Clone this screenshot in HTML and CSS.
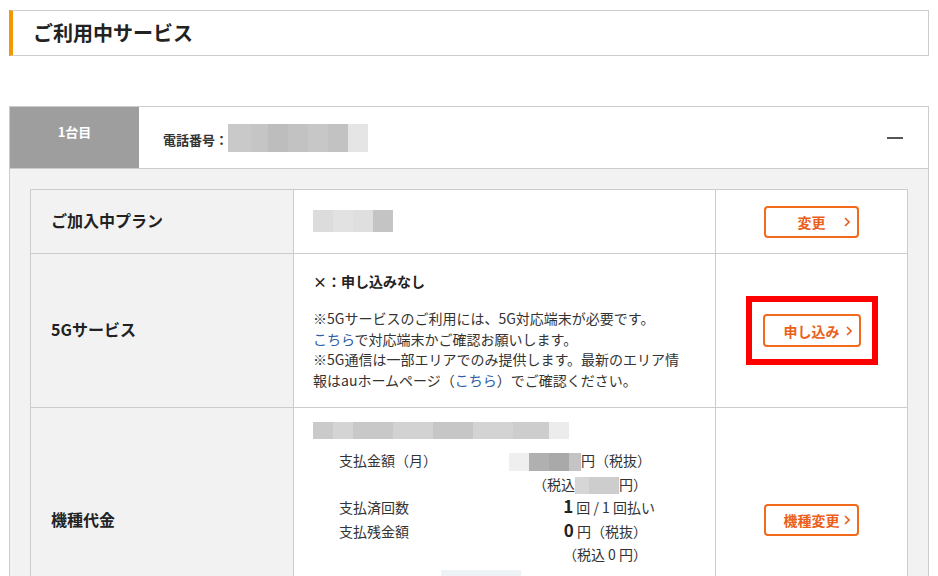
FILE: index.html
```html
<!DOCTYPE html>
<html lang="ja">
<head>
    <meta charset="UTF-8">
    <meta name="viewport" content="width=device-width, initial-scale=1.0">
    <title>ご利用中サービス</title>
    <link rel="stylesheet" href="styles.css">
</head>
<body>
    <div class="page">
        <h1 class="page-title">ご利用中サービス</h1>

        <section class="line-card">
            <div class="line-head">
                <div class="line-tab">1台目</div>
                <div class="line-phone">
                    <span class="phone-label">電話番号：</span>
                    <span class="blur blur-phone"></span>
                </div>
                <span class="toggle"></span>
            </div>

            <div class="line-body">
                <table class="svc-table">
                    <colgroup>
                        <col class="col-label">
                        <col class="col-info">
                        <col class="col-action">
                    </colgroup>
                    <tr class="row-plan">
                        <th>ご加入中プラン</th>
                        <td class="info"><span class="blur blur-plan"></span></td>
                        <td class="action">
                            <a class="btn" href="#">変更<svg class="chev" viewBox="0 0 6 10"><polyline points="1,1 5,5 1,9"/></svg></a>
                        </td>
                    </tr>
                    <tr class="row-5g">
                        <th>5Gサービス</th>
                        <td class="info">
                            <p class="status">×：申し込みなし</p>
                            <p class="note">※5Gサービスのご利用には、5G対応端末が必要です。<br><a href="#">こちら</a>で対応端末かご確認お願いします。<br>※5G通信は一部エリアでのみ提供します。最新のエリア情報はauホームページ（<a href="#">こちら</a>）でご確認ください。</p>
                        </td>
                        <td class="action">
                            <span class="mark">
                                <a class="btn btn-wide" href="#">申し込み<svg class="chev" viewBox="0 0 6 10"><polyline points="1,1 5,5 1,9"/></svg></a>
                            </span>
                        </td>
                    </tr>
                    <tr class="row-device">
                        <th>機種代金</th>
                        <td class="info">
                            <span class="blur blur-model"></span>
                            <div class="pay-grid">
                                <div class="pay-label">支払金額（月）</div>
                                <div class="pay-value"><span class="blur blur-amount"></span>円（税抜）<br>（税込<span class="blur blur-tax"></span>円）</div>
                                <div class="pay-label">支払済回数</div>
                                <div class="pay-value"><span class="over"><b>1</b> 回 / 1 回払い</span></div>
                                <div class="pay-label">支払残金額</div>
                                <div class="pay-value"><b>0</b> 円（税抜）<br>（税込 0 円）</div>
                            </div>
                            <span class="blur blur-next"></span>
                            <div class="pay-grid pay-more">
                                <div class="pay-label">&nbsp;</div>
                                <div class="pay-value">&nbsp;</div>
                            </div>
                        </td>
                        <td class="action">
                            <a class="btn" href="#">機種変更<svg class="chev" viewBox="0 0 6 10"><polyline points="1,1 5,5 1,9"/></svg></a>
                        </td>
                    </tr>
                </table>
            </div>
        </section>
    </div>
</body>
</html>
```

FILE: styles.css
```css
body { margin: 0; background: #fff; color: #333; font-family: "Noto Sans CJK JP", "Noto Sans", sans-serif; }
.page { padding: 10px 9px 0 9px; }

.page-title { margin: 0; height: 44px; line-height: 44px; padding-left: 20px; font-size: 20px; font-weight: 700; color: #222; border: 1px solid #ccc; border-left: 4px solid #f39800; }

.line-card { margin-top: 50px; border: 1px solid #ccc; }
.line-head { display: flex; height: 61px; border-bottom: 1px solid #ccc; background: #fff; }
.line-tab { width: 129px; background: #9e9e9e; color: #fff; font-size: 13px; font-weight: 700; text-align: center; line-height: 20px; padding-top: 15px; box-sizing: border-box; }
.line-phone { display: flex; align-items: center; padding-left: 24px; }
.phone-label { font-size: 13px; font-weight: 700; padding-top: 5px; line-height: 20px; }
.toggle { margin: auto 25px auto auto; width: 16px; height: 2px; background: #555; }

.line-body { background: #f2f2f2; padding: 20px; }
.svc-table { width: 100%; table-layout: fixed; border-collapse: collapse; background: #fff; }
.col-label { width: 263px; }
.col-action { width: 192px; }
.svc-table th, .svc-table td { border: 1px solid #ccc; }
.svc-table th { background: #f2f2f2; text-align: left; padding: 0 20px 3px; font-size: 16px; font-weight: 700; color: #222; }
.svc-table td.info { padding: 17px 19px; font-size: 14px; vertical-align: top; }
.svc-table td.action { text-align: center; vertical-align: middle; }
.row-plan th, .row-plan td.info { height: 60px; padding-top: 0; padding-bottom: 3px; vertical-align: middle; }

.status { margin: 0 0 17px; font-size: 14px; font-weight: 700; line-height: 20px; color: #222; }
.note { margin: 0; max-width: 374px; line-height: 20.5px; }
.note a { color: #2f5da8; text-decoration: none; }

.row-device td.info { padding-top: 14px; }
.pay-grid { display: grid; grid-template-columns: 170px 138px; margin: 10px 0 0 26px; line-height: 23.5px; }
.pay-more { margin-top: 8px; }
.pay-value { text-align: right; white-space: nowrap; }
.pay-value b { font-size: 17px; line-height: 1; color: #222; }
.over { margin-right: -8px; }

.btn { position: relative; display: inline-flex; align-items: center; justify-content: center; width: 95px; height: 32px; box-sizing: border-box; border: 2px solid #f26a1b; border-radius: 4px; color: #ea5f1c; font-size: 14px; font-weight: 700; text-decoration: none; background: #fff; }
.btn-wide { width: 98px; height: 33px; }
.chev { position: absolute; right: 7px; top: 50%; width: 6px; height: 10px; margin-top: -5px; fill: none; stroke: #ea5f1c; stroke-width: 1.6; }
.mark { display: inline-block; border: 6px solid #f00; padding: 12px 11px; line-height: 0; }

.blur { display: inline-block; vertical-align: middle; }
.blur-phone { width: 140px; height: 28px; background: linear-gradient(to right, #c9c9c9 0 23px, #c5c5c5 23px 40px, #bdbdbd 40px 60px, #c2c2c2 60px 80px, #c7c7c7 80px 100px, #c2c2c2 100px 120px, #e5e5e5 120px); }
.blur-plan { width: 80px; height: 22px; background: linear-gradient(to right, #dcdcdc 0 20px, #e2e2e2 20px 40px, #dfdfdf 40px 60px, #c4c4c4 60px); }
.blur-model { display: block; width: 256px; height: 17px; background: linear-gradient(to right, #cacaca 0 20px, #d4d4d4 20px 40px, #c8c8c8 40px 80px, #d2d2d2 80px 120px, #c6c6c6 120px 160px, #d3d3d3 160px 200px, #cdcdcd 200px 236px, #ececec 236px); }
.blur-amount { width: 72px; height: 18px; background: linear-gradient(to right, #efefef 0 20px, #b0b0b0 20px 40px, #a9a9a9 40px 60px, #c4c4c4 60px); }
.blur-tax { width: 44px; height: 17px; background: linear-gradient(to right, #d6d6d6 0 14px, #cdcdcd 14px); }
.blur-next { display: block; width: 80px; height: 14px; margin: 3px 0 0 128px; background: #eef3f6; }
```
